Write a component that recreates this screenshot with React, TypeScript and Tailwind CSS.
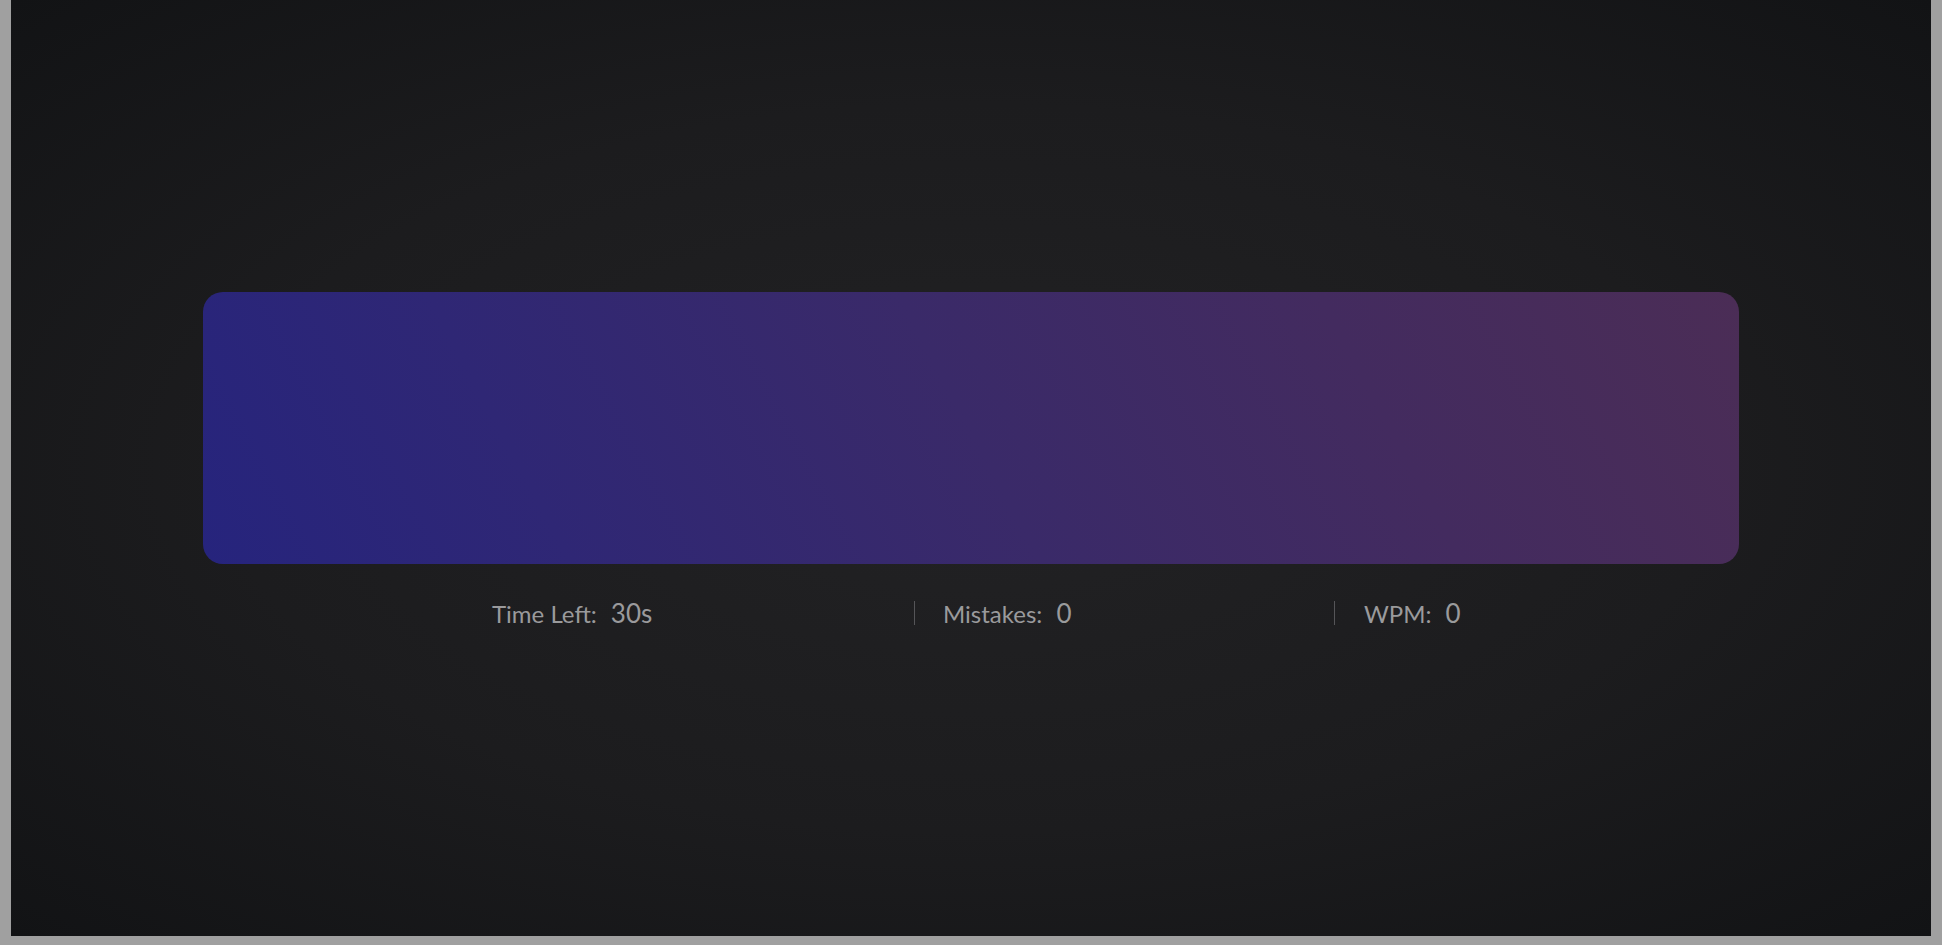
const stats = [
  { label: "Time Left:", value: "30s" },
  { label: "Mistakes:", value: "0" },
  { label: "WPM:", value: "0" },
];

export default function App() {
  return (
    <div className="w-[1942px] h-[945px] bg-[#a0a0a0] pl-[11px] overflow-hidden font-['Lato',sans-serif]">
      <div className="w-[1920px] h-[936px] bg-[radial-gradient(ellipse_at_center,#222224_0%,#1c1c1e_55%,#121315_100%)] flex flex-col items-center pt-[292px]">
        <div className="w-[1536px] h-[272px] rounded-[20px] bg-[linear-gradient(62deg,#26247d_0%,#2f2775_22%,#3a2a69_50%,#432b5f_75%,#4b2d56_100%)]" />
        <div className="w-[1536px] mt-[37px] flex h-[24px]">
          <div className="ml-[289px] w-[422px] flex items-center">
            <StatItem label={stats[0].label} value={stats[0].value} />
          </div>
          <div className="w-[420px] border-l border-[#555558] pl-[28px] flex items-center">
            <StatItem label={stats[1].label} value={stats[1].value} />
          </div>
          <div className="border-l border-[#555558] pl-[29px] flex items-center">
            <StatItem label={stats[2].label} value={stats[2].value} />
          </div>
        </div>
      </div>
    </div>
  );
}

function StatItem({ label, value }: { label: string; value: string }) {
  return (
    <div className="flex items-baseline gap-[14px] text-[#9a9a9c]">
      <span className="text-[24px] leading-none">{label}</span>
      <span className="text-[26px] leading-none">{value}</span>
    </div>
  );
}
